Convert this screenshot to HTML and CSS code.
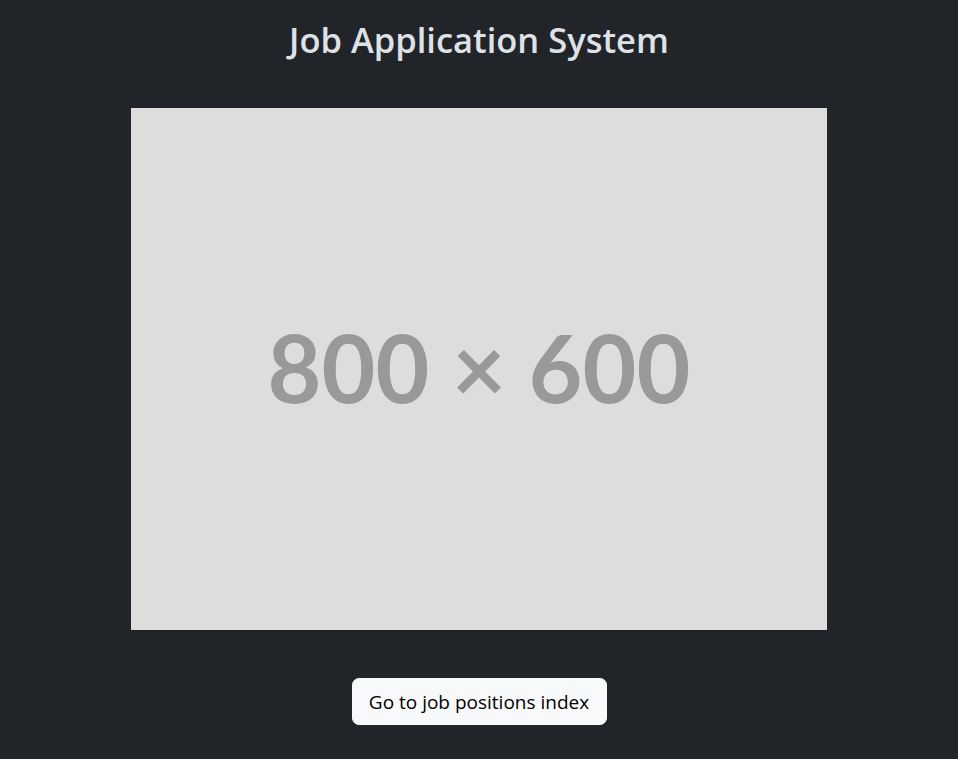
FILE: index.html
```html
<!DOCTYPE html>
<html lang="en">
<head>
<meta charset="utf-8">
<title>Job Application System</title>
<link rel="stylesheet" href="styles.css">
</head>
<body>
<main class="page">
  <h1 class="title">Job Application System</h1>
  <div class="placeholder">
    <span class="placeholder-text">800 × 600</span>
  </div>
  <a class="btn" href="#">Go to job positions index</a>
</main>
</body>
</html>
```
FILE: styles.css
```css
html, body {
  margin: 0;
  padding: 0;
  background: #212529;
  height: 100%;
}
.page {
  display: flex;
  flex-direction: column;
  align-items: center;
  padding-top: 19px;
  font-family: "Open Sans", "Noto Sans", sans-serif;
}
.title {
  margin: 0;
  font-size: 34.5px;
  font-weight: 600;
  line-height: 42px;
  color: #dee2e6;
}
.placeholder {
  margin-top: 47px;
  width: 696px;
  height: 522px;
  background: #dddddd;
  display: flex;
  align-items: center;
  justify-content: center;
}
.placeholder-text {
  font-family: Lato, "Open Sans", sans-serif;
  font-weight: 700;
  font-size: 93px;
  color: #999999;
  line-height: 1;
  margin-top: -4px;
}
.btn {
  margin-top: 48px;
  display: inline-block;
  box-sizing: border-box;
  width: 255px;
  height: 47px;
  padding-top: 2px;
  line-height: 43px;
  text-align: center;
  background: #f8f9fa;
  border: 1px solid #f8f9fa;
  border-radius: 7px;
  color: #000;
  text-decoration: none;
  font-size: 19px;
  font-family: "Open Sans", "Noto Sans", sans-serif;
}
```
